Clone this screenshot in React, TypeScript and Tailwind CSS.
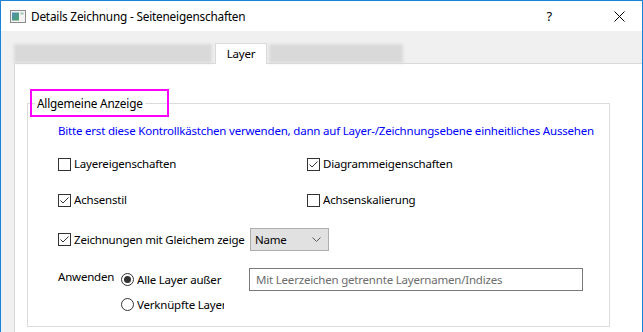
const CheckBox = ({ checked }: { checked?: boolean }) => (
  <span className="w-[13px] h-[13px] border border-[#333333] bg-white flex items-center justify-center shrink-0">
    {checked && (
      <svg width="11" height="11" viewBox="0 0 11 11">
        <path d="M1.5 5.5 L4 8 L9.5 2.5" fill="none" stroke="#333333" strokeWidth="1" />
      </svg>
    )}
  </span>
);

const Radio = ({ checked }: { checked?: boolean }) => (
  <span className="w-[13px] h-[13px] rounded-full border border-[#333333] bg-white flex items-center justify-center shrink-0">
    {checked && <span className="w-[7px] h-[7px] rounded-full bg-[#333333]" />}
  </span>
);

const TitleIcon = () => (
  <svg width="16" height="13" viewBox="0 0 16 13">
    <defs>
      <linearGradient id="ti" x1="0" y1="0" x2="1" y2="1">
        <stop offset="0" stopColor="#4d8fb8" />
        <stop offset="1" stopColor="#4fa36a" />
      </linearGradient>
    </defs>
    <rect x="0.5" y="0.5" width="15" height="12" fill="#f2f2f2" stroke="#8c8c8c" />
    <rect x="2" y="2.5" width="7" height="8" fill="url(#ti)" />
    <rect x="10.5" y="2.5" width="3" height="2" fill="#9cc7b0" />
  </svg>
);

export default function App() {
  return (
    <div className="w-[643px] h-[332px] overflow-hidden bg-white border-l border-t border-r border-[#1883d7] font-['Segoe_UI','Noto_Sans',sans-serif] text-[11.5px] tracking-[-0.2px] text-black leading-[16px]">
      {/* title bar */}
      <div className="h-[30px] flex items-center pl-[9px]">
        <TitleIcon />
        <span className="ml-[5px] text-[11.8px]">Details Zeichnung - Seiteneigenschaften</span>
        <span className="ml-auto mr-[62px] text-[13px]">?</span>
        <svg width="11" height="11" viewBox="0 0 11 11" className="mr-[17px]">
          <path d="M0.5 0.5 L10.5 10.5 M10.5 0.5 L0.5 10.5" stroke="#000" strokeWidth="1" />
        </svg>
      </div>

      <div className="bg-[#f0f0f0] pt-[11px] pl-[13px]">
        {/* tabs */}
        <div className="flex items-end h-[21px]">
          <div className="w-[198px] h-[19px] bg-[#d9d9d9] blur-[1.5px]" />
          <div className="ml-[3px] w-[52px] h-[21px] bg-white border border-b-0 border-[#d9d9d9] relative z-10 -mb-px flex items-center justify-center">
            Layer
          </div>
          <div className="ml-[2px] w-[134px] h-[19px] bg-[#d9d9d9] blur-[1.5px]" />
        </div>

        {/* panel */}
        <div className="w-[700px] h-[300px] bg-white border-l border-t border-[#d9d9d9] pl-[12px] pt-[39px]">
          <div className="relative w-[583px] h-[224px] border border-[#dcdcdc] pl-[30px] pt-[19px]">
            <span className="absolute left-[7px] -top-[9px] px-[2px] bg-white text-[11.8px]">Allgemeine Anzeige</span>
            <div className="absolute left-[2px] -top-[15px] w-[139px] h-[28px] border-2 border-[#ff00ff]" />

            <div className="text-[#0000ff] whitespace-nowrap">
              Bitte erst diese Kontrollkästchen verwenden, dann auf Layer-/Zeichnungsebene einheitliches Aussehen
            </div>

            <div className="flex mt-[17px] h-[16px] items-center">
              <div className="w-[249px] flex items-center gap-[3px]">
                <CheckBox />
                <span>Layereigenschaften</span>
              </div>
              <div className="flex items-center gap-[3px]">
                <CheckBox checked />
                <span>Diagrammeigenschaften</span>
              </div>
            </div>

            <div className="flex mt-[20px] h-[16px] items-center">
              <div className="w-[249px] flex items-center gap-[3px]">
                <CheckBox checked />
                <span>Achsenstil</span>
              </div>
              <div className="flex items-center gap-[3px]">
                <CheckBox />
                <span>Achsenskalierung</span>
              </div>
            </div>

            <div className="flex mt-[20px] h-[23px] items-center">
              <CheckBox checked />
              <span className="ml-[3px] w-[171px] overflow-hidden whitespace-nowrap">Zeichnungen mit Gleichem zeigen</span>
              <div className="ml-[5px] w-[79px] h-[23px] bg-[#e1e1e1] border border-[#adadad] flex items-center pl-[4px] pr-[7px]">
                <span>Name</span>
                <svg width="9" height="5" viewBox="0 0 9 5" className="ml-auto">
                  <path d="M0.5 0.5 L4.5 4.5 L8.5 0.5" fill="none" stroke="#5a5a5a" strokeWidth="1" />
                </svg>
              </div>
            </div>

            <div className="flex mt-[17px]">
              <span className="w-[63px] mt-[1px]">Anwenden</span>
              <div className="flex flex-col pt-[5px]">
                <div className="flex items-center gap-[3px] h-[13px]">
                  <Radio checked />
                  <span className="w-[87px] overflow-hidden whitespace-nowrap">Alle Layer außer</span>
                </div>
                <div className="flex items-center gap-[3px] h-[13px] mt-[12px]">
                  <Radio />
                  <span className="w-[87px] overflow-hidden whitespace-nowrap">Verknüpfte Layer</span>
                </div>
              </div>
              <div className="ml-[25px] w-[334px] h-[23px] border border-[#7a7a7a] flex items-center pl-[6px] text-[#6d6d6d]">
                Mit Leerzeichen getrennte Layernamen/Indizes
              </div>
            </div>
          </div>
        </div>
      </div>
    </div>
  );
}
